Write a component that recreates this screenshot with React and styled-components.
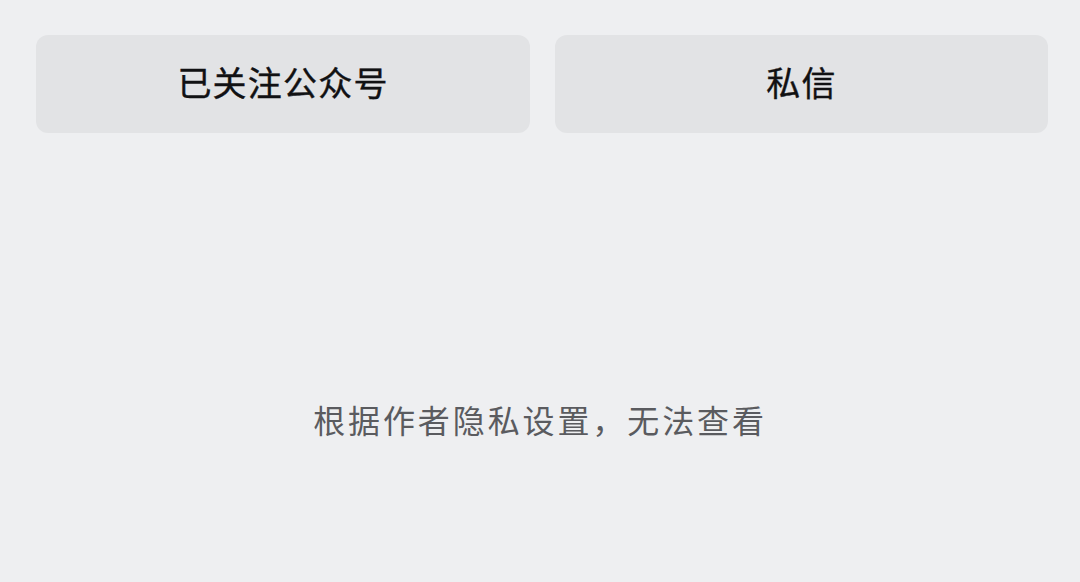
import React from "react";
import styled, { createGlobalStyle } from "styled-components";

const Global = createGlobalStyle`
  html, body { margin: 0; padding: 0; background: #eeeff1; }
  body { font-family: "Noto Sans CJK SC", "Noto Sans", sans-serif; }
`;

const Page = styled.div`
  width: 1080px;
  height: 582px;
  background: #eeeff1;
  box-sizing: border-box;
  padding: 35px 32px 0 36px;
  display: flex;
  flex-direction: column;
`;

const ButtonRow = styled.div`
  display: grid;
  grid-template-columns: 494px 493px;
  column-gap: 25px;
`;

const ActionButton = styled.div`
  height: 98px;
  box-sizing: border-box;
  padding-bottom: 6px;
  border-radius: 12px;
  background: #e2e3e5;
  display: flex;
  align-items: center;
  justify-content: center;
  font-size: 34px;
  font-weight: 400;
  color: #111113;
  letter-spacing: 1.2px;
  -webkit-text-stroke: 0.4px #111113;
`;

const Notice = styled.div`
  margin-top: 264px;
  margin-left: -4px;
  text-align: center;
  font-size: 32px;
  font-weight: 400;
  color: #5a5b5f;
  line-height: 44px;
  letter-spacing: 2.9px;
`;

export default function App() {
  return (
    <>
      <Global />
      <Page>
        <ButtonRow>
          <ActionButton>已关注公众号</ActionButton>
          <ActionButton>私信</ActionButton>
        </ButtonRow>
        <Notice>根据作者隐私设置，无法查看</Notice>
      </Page>
    </>
  );
}
